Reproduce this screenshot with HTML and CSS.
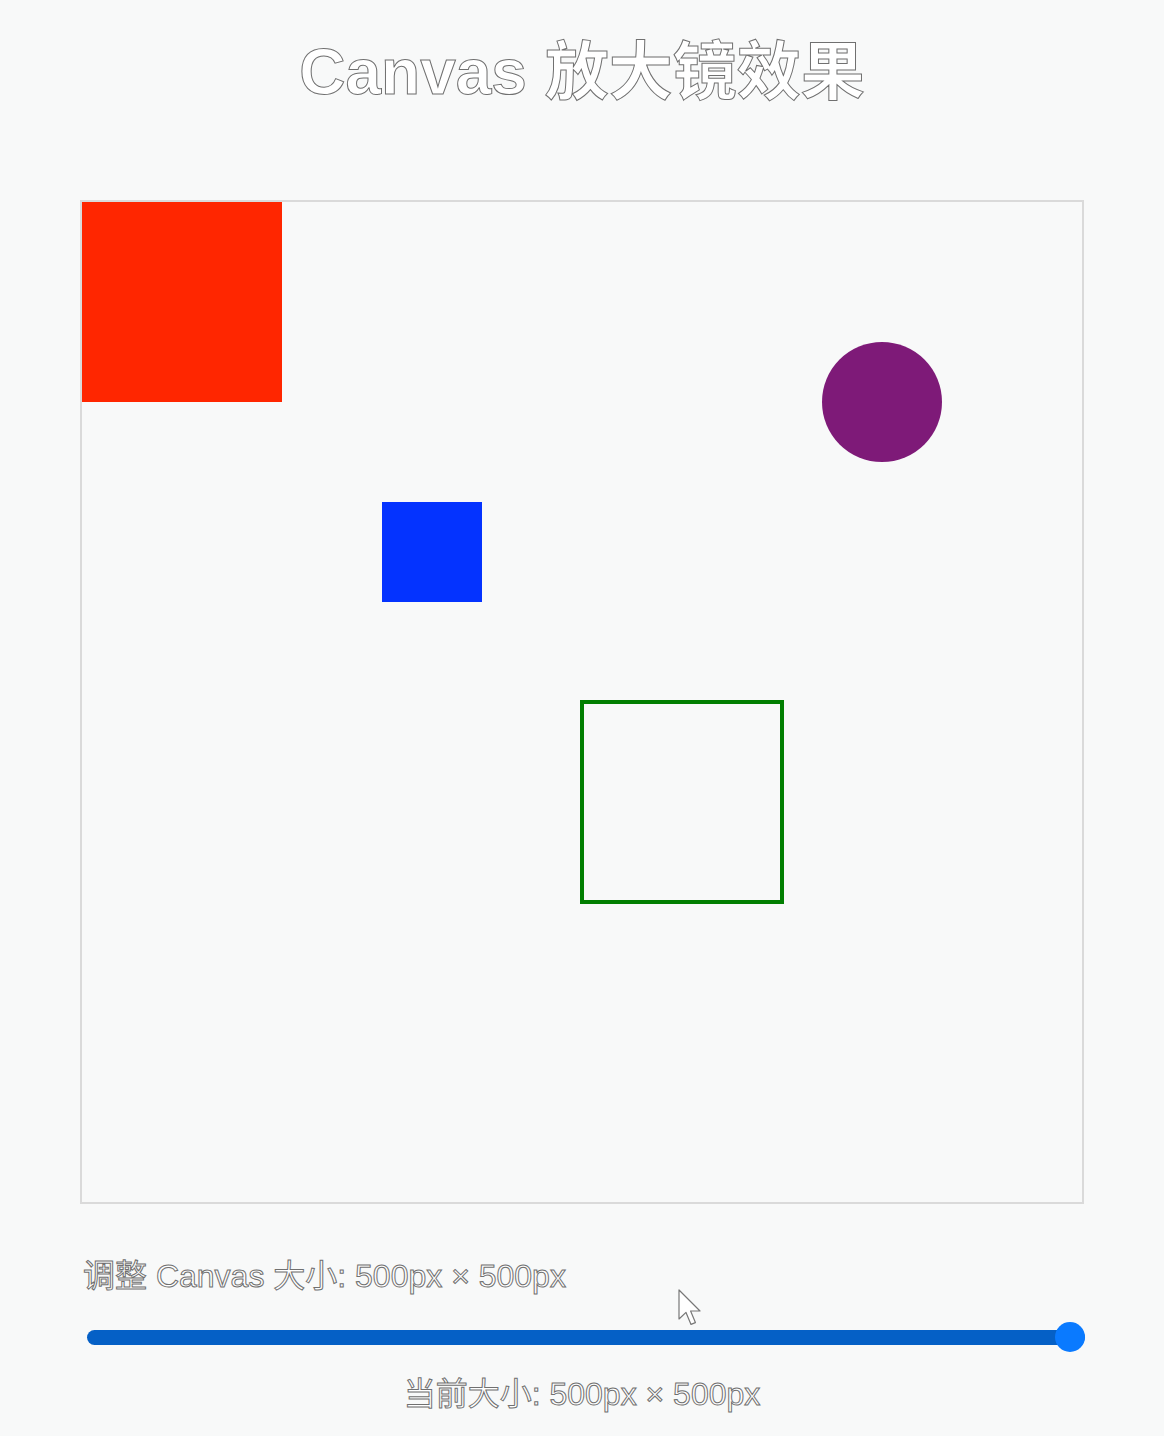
FILE: index.html
```html
<!DOCTYPE html>
<html lang="zh-CN">
<head>
<meta charset="utf-8">
<title>Canvas 放大镜效果</title>
<link rel="stylesheet" href="styles.css">
</head>
<body>
<main class="page">
  <h1 class="title">Canvas 放大镜效果</h1>
  <div class="stage">
    <svg class="drawing" width="1000" height="1000" viewBox="0 0 500 500" xmlns="http://www.w3.org/2000/svg">
      <rect x="0" y="0" width="100" height="100" fill="#ff2600"/>
      <rect x="150" y="150" width="50" height="50" fill="#0433ff"/>
      <circle cx="400" cy="100" r="30" fill="#7e1a78"/>
      <rect x="250" y="250" width="100" height="100" fill="none" stroke="#017f01" stroke-width="2"/>
    </svg>
  </div>
  <div class="controls">
    <label class="size-label" for="size">调整 Canvas 大小: 500px × 500px</label>
    <div class="slider-wrap">
      <input class="slider" id="size" type="range" min="100" max="500" value="500">
      <svg class="cursor" width="26" height="40" viewBox="0 0 13 20" xmlns="http://www.w3.org/2000/svg">
        <path d="M1 1 L1 15.5 L4.5 12.2 L7 18.2 L9.2 17.3 L6.8 11.5 L11.5 11.5 Z" fill="#fff" stroke="#777" stroke-width="0.6" stroke-linejoin="round"/>
      </svg>
    </div>
    <p class="current">当前大小: 500px × 500px</p>
  </div>
</main>
</body>
</html>
```

FILE: styles.css
```css
html, body {
  margin: 0;
  padding: 0;
  background: #f8f9f9;
}

body {
  font-family: "Liberation Sans", Arial, "Noto Sans CJK SC", sans-serif;
}

.page {
  display: flex;
  flex-direction: column;
  align-items: center;
}

.title,
.size-label,
.current {
  color: #ffffff;
  -webkit-text-stroke: 1px #707070;
}

.title {
  margin: 32px 0 0;
  font-size: 64px;
  line-height: 80px;
  font-weight: bold;
  text-align: center;
}

.stage {
  margin-top: 88px;
  width: 1000px;
  height: 1000px;
  border: 2px solid #dadada;
}

.drawing {
  display: block;
}

.controls {
  width: 1004px;
  display: flex;
  flex-direction: column;
}

.size-label {
  margin-top: 52px;
  padding-left: 3px;
  font-size: 32px;
  line-height: 40px;
}

.slider-wrap {
  position: relative;
  margin-top: 26px;
  height: 30px;
}

.slider {
  -webkit-appearance: none;
  appearance: none;
  display: block;
  margin: 0 0 0 7px;
  width: 998px;
  height: 30px;
  background: transparent;
}

.slider::-webkit-slider-runnable-track {
  height: 15px;
  border-radius: 8px;
  background: #0560c6;
}

.slider::-webkit-slider-thumb {
  -webkit-appearance: none;
  appearance: none;
  width: 30px;
  height: 30px;
  margin-top: -7.5px;
  border-radius: 50%;
  background: #0a7aff;
  border: none;
}

.cursor {
  position: absolute;
  left: 597px;
  top: -34px;
}

.current {
  margin: 22px 0 0;
  font-size: 32px;
  line-height: 40px;
  text-align: center;
}
```
